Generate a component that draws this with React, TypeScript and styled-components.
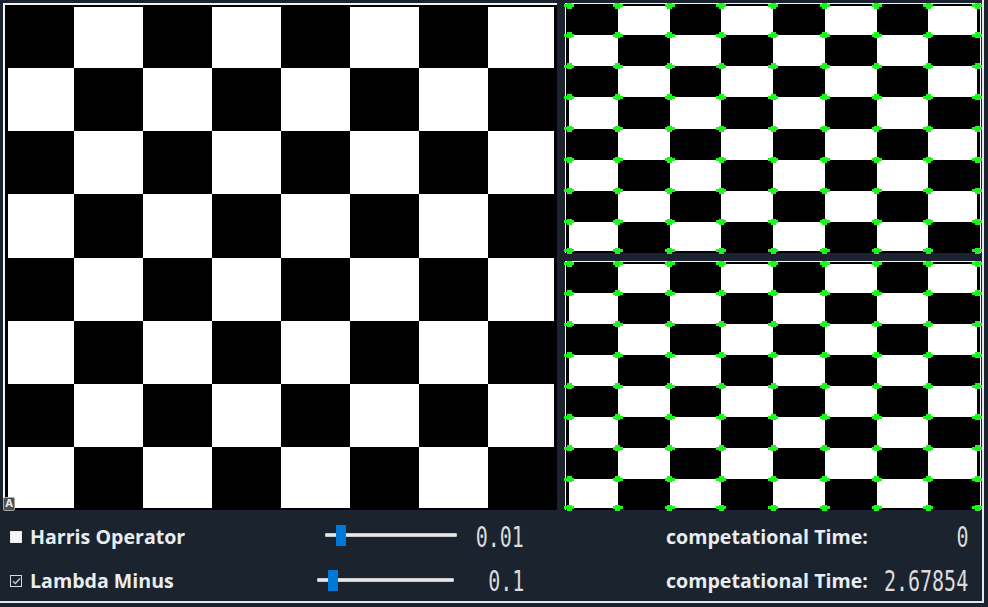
import React from 'react';
import styled, { createGlobalStyle } from 'styled-components';

const GlobalStyle = createGlobalStyle`
  html, body { margin: 0; padding: 0; background: #1b232e; }
  body { width: 988px; height: 607px; overflow: hidden; font-family: "Open Sans", "Noto Sans", sans-serif; }
  * { box-sizing: border-box; }
`;

const Window = styled.div`
  width: 984px;
  height: 603px;
  background: #1b232e;
  border-right: 2px solid #e3e7eb;
  border-bottom: 2px solid #e3e7eb;
  display: flex;
  flex-direction: column;
`;

const Views = styled.div`
  height: 510px;
  padding: 3px 0 0 3px;
  display: flex;
  gap: 8px;
  flex: none;
`;

const MainFrame = styled.div`
  position: relative;
  width: 554px;
  height: 507px;
  border-top: 2px solid #f2f2f2;
  border-left: 2px solid #f2f2f2;
  display: flex;
`;

const SideColumn = styled.div`
  width: 416px;
  display: flex;
  flex-direction: column;
  gap: 8px;
`;

const SideFrame = styled.div<{ $h: number }>`
  width: 416px;
  height: ${(p) => p.$h}px;
  border-top: 1px solid #f2f2f2;
  border-left: 1px solid #f2f2f2;
  border-right: 1px solid #f2f2f2;
  display: flex;
`;

const Badge = styled.div`
  position: absolute;
  left: -2px;
  bottom: -1px;
  width: 12px;
  height: 14px;
  background: #4d4f52;
  border: 1px solid #a2a4a6;
  border-radius: 2px;
  color: #e8e8e8;
  font: bold 10px/11px "DejaVu Sans", sans-serif;
  display: flex;
  justify-content: center;
`;

const Panel = styled.div`
  height: 91px;
  flex: none;
  padding-top: 5px;
  padding-right: 12px;
  display: grid;
  grid-template-columns: 310px 150px 66px 140px 220px minmax(0, 1fr);
  grid-auto-rows: 44px;
  align-items: center;
`;

const OptionCell = styled.div`
  display: flex;
  align-items: center;
  gap: 8px;
  padding-left: 10px;
  height: 100%;
`;

const Box = styled.span<{ $checked: boolean }>`
  width: 12px;
  height: 12px;
  flex: none;
  display: flex;
  align-items: center;
  justify-content: center;
  background: ${(p) => (p.$checked ? '#1b232e' : '#f4f5f6')};
  border: 1px solid ${(p) => (p.$checked ? '#d7dadd' : '#e6e8ea')};
`;

const Label = styled.span`
  color: #e9edf2;
  font-family: "Open Sans", "Noto Sans", sans-serif;
  font-weight: 700;
  font-size: 19.6px;
  line-height: 1;
  white-space: nowrap;
`;

const SliderCell = styled.div`
  display: flex;
  align-items: center;
  height: 100%;
`;

const Track = styled.div<{ $offset: number; $width: number; $lift: number }>`
  position: relative;
  margin-left: ${(p) => p.$offset}px;
  margin-bottom: ${(p) => p.$lift}px;
  width: ${(p) => p.$width}px;
  height: 4px;
  background: #e6e7e8;
  border: 1px solid #c9cbcd;
  border-radius: 1px;
`;

const Handle = styled.div<{ $left: number }>`
  position: absolute;
  left: ${(p) => p.$left}px;
  top: 50%;
  margin-top: -10px;
  width: 10px;
  height: 21px;
  background: #0078d7;
`;

const LcdCell = styled.div`
  display: flex;
  justify-content: flex-end;
  align-items: center;
  padding-right: 2px;
  height: 100%;
  min-width: 0;
`;

const Lcd = styled.span`
  display: inline-block;
  flex: none;
  font-family: "DejaVu Sans Mono", monospace;
  font-size: 29px;
  line-height: 1;
  color: #dcdcdc;
  transform: scaleX(0.69);
  transform-origin: right center;
  white-space: nowrap;
`;

const Spacer = styled.div``;

const TimeLabel = styled(Label)``;

function Checker({ w, h, markers }: { w: number; h: number; markers?: boolean }) {
  const cw = w / 8;
  const ch = h / 8;
  const cells: React.ReactNode[] = [];
  for (let r = 0; r < 8; r++) {
    for (let c = 0; c < 8; c++) {
      if ((r + c) % 2 === 1) {
        cells.push(
          <rect key={`s${r}-${c}`} x={c * cw} y={r * ch} width={cw} height={ch} fill="#fff" />
        );
      }
    }
  }
  const marks: React.ReactNode[] = [];
  if (markers) {
    for (let i = 0; i <= 8; i++) {
      for (let j = 0; j <= 8; j++) {
        const x = Math.min(Math.max(i * cw, 3), w - 3);
        const y = Math.min(Math.max(j * ch, 1.5), h - 2.5);
        marks.push(
          <path
            key={`m${i}-${j}`}
            d={`M${x - 5} ${y - 1.5}h10v3h-10z M${x - 2.5} ${y - 3}h5v6h-5z`}
            fill="#1ef51e"
          />
        );
      }
    }
  }
  return (
    <svg width={w} height={h} viewBox={`0 0 ${w} ${h}`} shapeRendering="crispEdges" style={{ display: 'block', overflow: 'visible' }}>
      <rect x={0} y={0} width={w} height={h} fill="#000" />
      {cells}
      <rect x={0} y={0} width={3} height={h} fill="#000" />
      <rect x={0} y={0} width={w} height={2} fill="#000" />
      <rect x={w - 3} y={0} width={3} height={h} fill="#000" />
      <rect x={0} y={h - 2} width={w} height={2} fill="#000" />
      {marks}
    </svg>
  );
}

function CheckBox({ checked }: { checked: boolean }) {
  return (
    <Box $checked={checked} role="checkbox" aria-checked={checked}>
      {checked && (
        <svg width="9" height="8" viewBox="0 0 9 8">
          <path d="M1 4.2 L3.4 6.5 L8 1.5" fill="none" stroke="#c9cccf" strokeWidth="1.4" />
        </svg>
      )}
    </Box>
  );
}

type RowProps = {
  label: string;
  checked: boolean;
  offset: number;
  width: number;
  lift: number;
  value: string;
  time: string;
};

function ControlRow({ label, checked, offset, width, lift, value, time }: RowProps) {
  return (
    <>
      <OptionCell>
        <CheckBox checked={checked} />
        <Label>{label}</Label>
      </OptionCell>
      <SliderCell>
        <Track $offset={offset} $width={width} $lift={lift}>
          <Handle $left={10} />
        </Track>
      </SliderCell>
      <LcdCell>
        <Lcd>{value}</Lcd>
      </LcdCell>
      <Spacer />
      <TimeLabel>competational Time:</TimeLabel>
      <LcdCell>
        <Lcd>{time}</Lcd>
      </LcdCell>
    </>
  );
}

export default function App() {
  return (
    <>
      <GlobalStyle />
      <Window>
        <Views>
          <MainFrame>
            <Checker w={552} h={505} />
            <Badge>A</Badge>
          </MainFrame>
          <SideColumn>
            <SideFrame $h={250}>
              <Checker w={414} h={249} markers />
            </SideFrame>
            <SideFrame $h={249}>
              <Checker w={414} h={248} markers />
            </SideFrame>
          </SideColumn>
        </Views>
        <Panel>
          <ControlRow label="Harris Operator" checked={false} offset={15} width={132} lift={4} value="0.01" time="0" />
          <ControlRow label="Lambda Minus" checked={true} offset={7} width={137} lift={3} value="0.1" time="2.67854" />
        </Panel>
      </Window>
    </>
  );
}
